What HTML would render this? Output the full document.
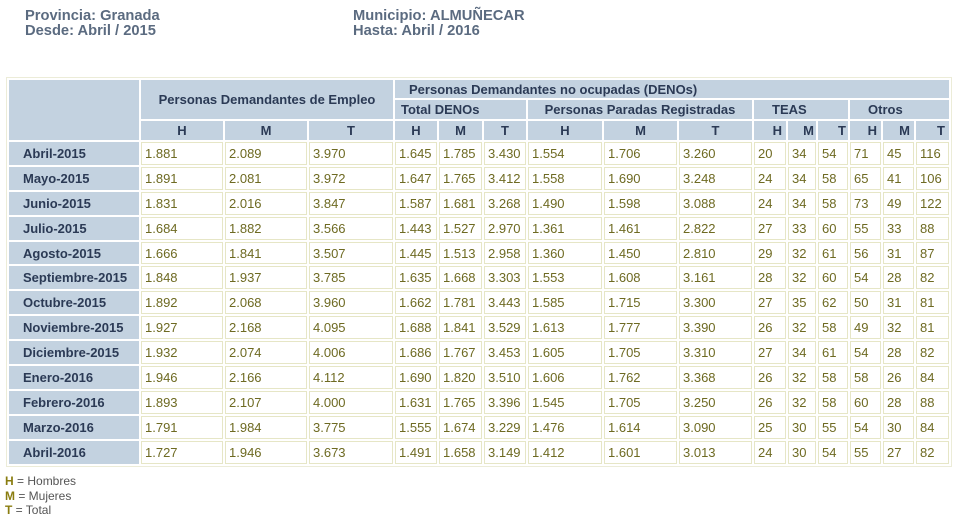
<!DOCTYPE html>
<html><head><meta charset="utf-8"><style>
body{margin:0;background:#fff;font-family:"Liberation Sans",sans-serif;width:960px;height:525px;overflow:hidden;position:relative}
.top{position:absolute;top:9px;font-weight:bold;font-size:14.7px;line-height:15px;color:#5b6b80}
table{position:absolute;left:6px;top:77px;border-collapse:separate;border-spacing:2px;table-layout:fixed;border:1px solid #ececd8;background:#fff}
td,th{padding:0;font-size:13px;height:19px;box-sizing:border-box}
th{background:#c3d2e0;color:#2b3a55;font-weight:bold;text-align:center}
td{border:1px solid #e6e6c6;color:#6e6a22;height:22.9px;padding-left:3px;white-space:nowrap}
th.l{text-align:left;padding-left:14px;height:22.9px}
.leg{position:absolute;left:5px;top:474px;font-size:12px;line-height:14.5px;color:#555}
.leg b{color:#8a7d10}
</style></head><body>
<div class="top" style="left:25px">Provincia: Granada<br>Desde: Abril / 2015</div>
<div class="top" style="left:353px">Municipio: ALMUÑECAR<br>Hasta: Abril / 2016</div>
<table>
<colgroup><col style="width:130px"><col style="width:82px"><col style="width:82px"><col style="width:84px"><col style="width:42px"><col style="width:43px"><col style="width:42px"><col style="width:74px"><col style="width:73px"><col style="width:73px"><col style="width:32px"><col style="width:28px"><col style="width:30px"><col style="width:31px"><col style="width:31px"><col style="width:33px"></colgroup>
<tr><th rowspan="3"></th><th colspan="3" rowspan="2">Personas Demandantes de Empleo</th><th colspan="12" style="text-align:left;padding-left:14px;height:18px">Personas Demandantes no ocupadas (DENOs)</th></tr>
<tr><th colspan="3" style="text-align:left;padding-left:6px">Total DENOs</th><th colspan="3">Personas Paradas Registradas</th><th colspan="3" style="text-align:left;padding-left:18px">TEAS</th><th colspan="3" style="text-align:left;padding-left:18px">Otros</th></tr>
<tr><th>H</th><th>M</th><th>T</th><th>H</th><th>M</th><th>T</th><th>H</th><th>M</th><th>T</th><th style="text-align:right;padding-right:4px">H</th><th style="text-align:right;padding-right:2px">M</th><th style="text-align:right;padding-right:2px">T</th><th style="text-align:right;padding-right:4px">H</th><th style="text-align:right;padding-right:4px">M</th><th style="text-align:right;padding-right:4px">T</th></tr>
<tr><th class="l">Abril-2015</th><td>1.881</td><td>2.089</td><td>3.970</td><td>1.645</td><td>1.785</td><td>3.430</td><td>1.554</td><td>1.706</td><td>3.260</td><td>20</td><td>34</td><td>54</td><td>71</td><td>45</td><td>116</td></tr>
<tr><th class="l">Mayo-2015</th><td>1.891</td><td>2.081</td><td>3.972</td><td>1.647</td><td>1.765</td><td>3.412</td><td>1.558</td><td>1.690</td><td>3.248</td><td>24</td><td>34</td><td>58</td><td>65</td><td>41</td><td>106</td></tr>
<tr><th class="l">Junio-2015</th><td>1.831</td><td>2.016</td><td>3.847</td><td>1.587</td><td>1.681</td><td>3.268</td><td>1.490</td><td>1.598</td><td>3.088</td><td>24</td><td>34</td><td>58</td><td>73</td><td>49</td><td>122</td></tr>
<tr><th class="l">Julio-2015</th><td>1.684</td><td>1.882</td><td>3.566</td><td>1.443</td><td>1.527</td><td>2.970</td><td>1.361</td><td>1.461</td><td>2.822</td><td>27</td><td>33</td><td>60</td><td>55</td><td>33</td><td>88</td></tr>
<tr><th class="l">Agosto-2015</th><td>1.666</td><td>1.841</td><td>3.507</td><td>1.445</td><td>1.513</td><td>2.958</td><td>1.360</td><td>1.450</td><td>2.810</td><td>29</td><td>32</td><td>61</td><td>56</td><td>31</td><td>87</td></tr>
<tr><th class="l">Septiembre-2015</th><td>1.848</td><td>1.937</td><td>3.785</td><td>1.635</td><td>1.668</td><td>3.303</td><td>1.553</td><td>1.608</td><td>3.161</td><td>28</td><td>32</td><td>60</td><td>54</td><td>28</td><td>82</td></tr>
<tr><th class="l">Octubre-2015</th><td>1.892</td><td>2.068</td><td>3.960</td><td>1.662</td><td>1.781</td><td>3.443</td><td>1.585</td><td>1.715</td><td>3.300</td><td>27</td><td>35</td><td>62</td><td>50</td><td>31</td><td>81</td></tr>
<tr><th class="l">Noviembre-2015</th><td>1.927</td><td>2.168</td><td>4.095</td><td>1.688</td><td>1.841</td><td>3.529</td><td>1.613</td><td>1.777</td><td>3.390</td><td>26</td><td>32</td><td>58</td><td>49</td><td>32</td><td>81</td></tr>
<tr><th class="l">Diciembre-2015</th><td>1.932</td><td>2.074</td><td>4.006</td><td>1.686</td><td>1.767</td><td>3.453</td><td>1.605</td><td>1.705</td><td>3.310</td><td>27</td><td>34</td><td>61</td><td>54</td><td>28</td><td>82</td></tr>
<tr><th class="l">Enero-2016</th><td>1.946</td><td>2.166</td><td>4.112</td><td>1.690</td><td>1.820</td><td>3.510</td><td>1.606</td><td>1.762</td><td>3.368</td><td>26</td><td>32</td><td>58</td><td>58</td><td>26</td><td>84</td></tr>
<tr><th class="l">Febrero-2016</th><td>1.893</td><td>2.107</td><td>4.000</td><td>1.631</td><td>1.765</td><td>3.396</td><td>1.545</td><td>1.705</td><td>3.250</td><td>26</td><td>32</td><td>58</td><td>60</td><td>28</td><td>88</td></tr>
<tr><th class="l">Marzo-2016</th><td>1.791</td><td>1.984</td><td>3.775</td><td>1.555</td><td>1.674</td><td>3.229</td><td>1.476</td><td>1.614</td><td>3.090</td><td>25</td><td>30</td><td>55</td><td>54</td><td>30</td><td>84</td></tr>
<tr><th class="l">Abril-2016</th><td>1.727</td><td>1.946</td><td>3.673</td><td>1.491</td><td>1.658</td><td>3.149</td><td>1.412</td><td>1.601</td><td>3.013</td><td>24</td><td>30</td><td>54</td><td>55</td><td>27</td><td>82</td></tr>
</table>
<div class="leg"><b>H</b> = Hombres<br><b>M</b> = Mujeres<br><b>T</b> = Total</div>
</body></html>
